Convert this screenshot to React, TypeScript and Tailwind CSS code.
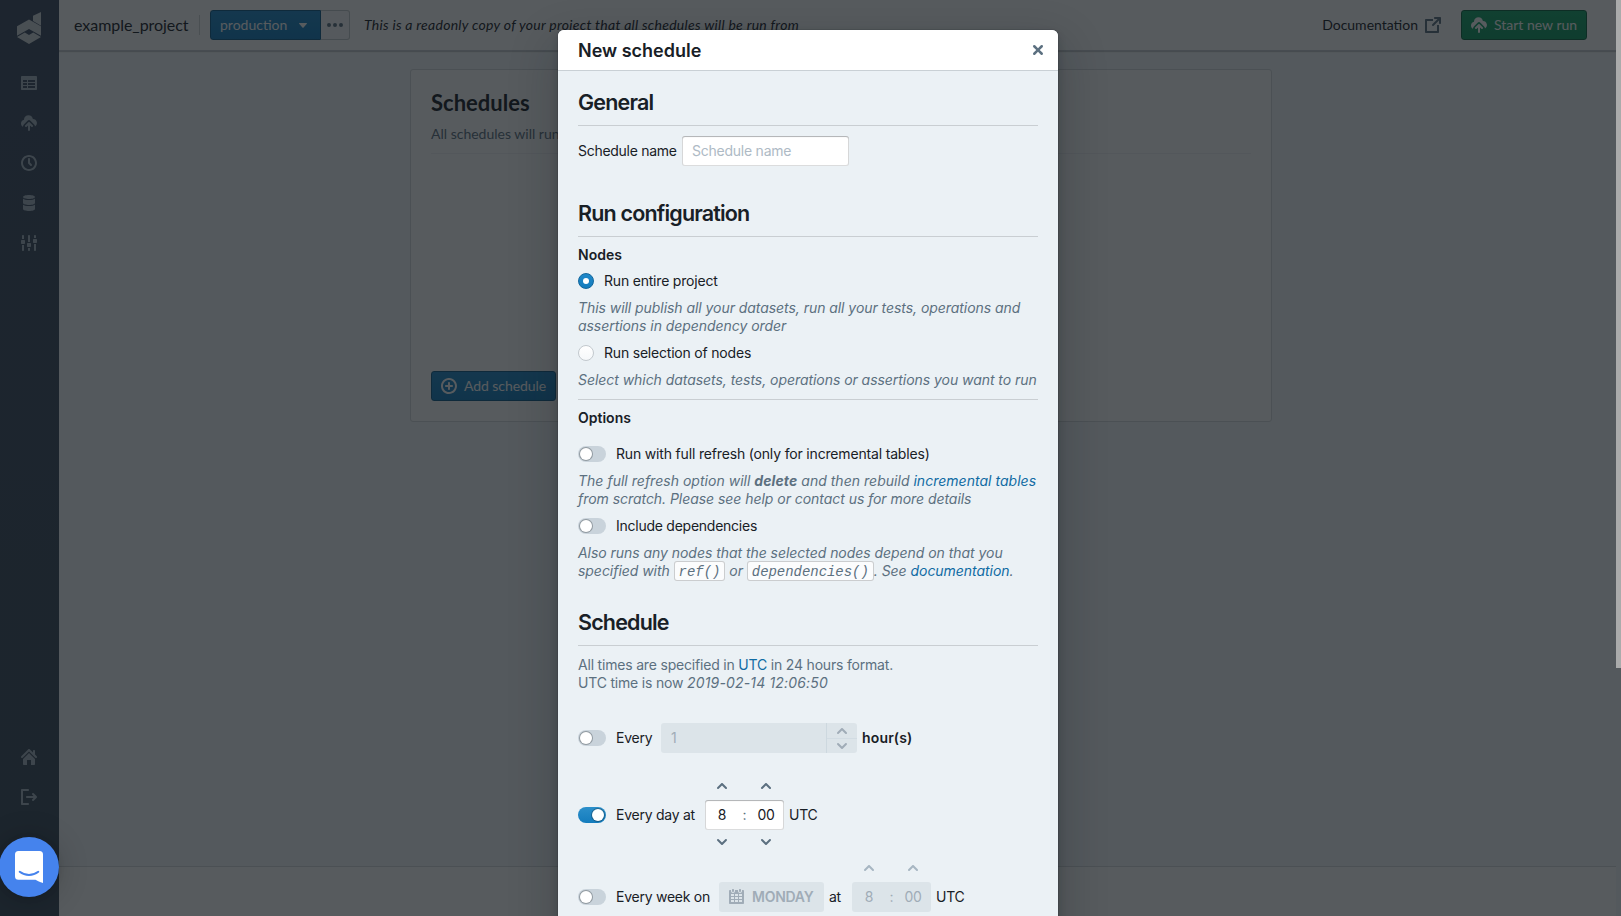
import type { ReactNode } from "react";

type IconProps = { d: string; className?: string; size?: number };

const ICONS = {
  table:
    "M15 1H1c-.6 0-1 .5-1 1v12c0 .6.4 1 1 1h14c.6 0 1-.4 1-1V2c0-.5-.4-1-1-1zM6 13H2v-2h4v2zm0-3H2V8h4v2zm0-3H2V5h4v2zm8 6H7v-2h7v2zm0-3H7V8h7v2zm0-3H7V5h7v2z",
  upload:
    "M8.71 7.29a1 1 0 0 0-1.42 0l-3 3a1 1 0 0 0 1.42 1.42L7 10.41V15a1 1 0 1 0 2 0v-4.59l1.29 1.3a1 1 0 0 0 1.42-1.42l-3-3zM12 4h-.1C11.5 1.800 9.900.2 7.500.2 5 .2 3 1.900 3 4.400v.4C1.200 5.200 0 6.700 0 8.500c0 1.400.7 2.600 1.900 3.200.1-.8.5-1.600 1-2.200l3.700-3.700a2 2 0 0 1 2.800 0l3.700 3.700c.5.500.800 1.200.900 1.900A3.990 3.990 0 0 0 12 4z",
  time:
    "M8 0C3.580 0 0 3.580 0 8s3.580 8 8 8 8-3.580 8-8-3.580-8-8-8zm0 14c-3.310 0-6-2.690-6-6s2.690-6 6-6 6 2.690 6 6-2.690 6-6 6zm1-6.410V4c0-.55-.45-1-1-1s-1 .45-1 1v4c0 .28.11.53.29.71l2 2a1.003 1.003 0 0 0 1.420-1.420L9 7.590z",
  database:
    "M8 0C4.700 0 2 .9 2 2s2.700 2 6 2 6-.9 6-2-2.700-2-6-2zM2 3.500V8c0 1.100 2.700 2 6 2s6-.9 6-2V3.500C13 4.500 10.700 5 8 5s-5-.5-6-1.500zm0 6V14c0 1.100 2.700 2 6 2s6-.9 6-2V9.500c-1 1-3.300 1.500-6 1.500s-5-.5-6-1.500z",
  settings:
    "M3 1c0-.55-.45-1-1-1S1 .45 1 1v3h2V1zM1 15c0 .55.45 1 1 1s1-.45 1-1v-5H1v5zM3.200 5H.8C.36 5 0 5.450 0 6v2c0 .55.36 1 .8 1h2.400c.44 0 .8-.45.8-1V6c0-.55-.36-1-.8-1zM9 1c0-.55-.45-1-1-1S7 .45 7 1v6h2V1zM7 15c0 .55.45 1 1 1s1-.45 1-1v-2H7v2zm2.200-7H6.800c-.44 0-.8.45-.8 1v2c0 .55.36 1 .8 1h2.400c.44 0 .8-.45.8-1V9c0-.55-.36-1-.8-1zM15 1c0-.55-.45-1-1-1s-1 .45-1 1v2h2V1zm-2 14c0 .55.45 1 1 1s1-.45 1-1V9h-2v6zm2.200-11h-2.400c-.44 0-.8.45-.8 1v2c0 .55.36 1 .8 1h2.400c.44 0 .8-.45.8-1V5c0-.55-.36-1-.8-1z",
  home:
    "M2 10v5c0 .55.45 1 1 1h3v-5h4v5h3c.55 0 1-.45 1-1v-5L8 4l-6 6zm13.710-2.710L14 5.590V2c0-.55-.45-1-1-1s-1 .45-1 1v1.590L8.710.29C8.530.11 8.280 0 8 0s-.53.11-.71.29l-7 7a1.003 1.003 0 0 0 1.420 1.420L8 2.410l6.290 6.290c.18.19.43.3.71.3a1.003 1.003 0 0 0 .71-1.710z",
  logout:
    "M7 14H2V2h5c.55 0 1-.45 1-1s-.45-1-1-1H1C.45 0 0 .45 0 1v14c0 .55.45 1 1 1h6c.55 0 1-.45 1-1s-.45-1-1-1zm8.710-6.710l-3-3a1.003 1.003 0 0 0-1.420 1.420L12.590 7H6c-.55 0-1 .45-1 1s.45 1 1 1h6.590l-1.290 1.290c-.19.18-.3.43-.3.71a1.003 1.003 0 0 0 1.710.71l3-3c.18-.18.29-.43.29-.71 0-.28-.11-.53-.29-.71z",
  share:
    "M15 0h-5c-.55 0-1 .45-1 1s.45 1 1 1h2.590L7.290 7.290a1.003 1.003 0 0 0 1.420 1.420L14 3.410V6c0 .55.45 1 1 1s1-.45 1-1V1c0-.55-.45-1-1-1zm-3 8v6H2V4h6V2H1c-.55 0-1 .45-1 1v12c0 .55.45 1 1 1h12c.55 0 1-.45 1-1V8h-2z",
  more: "M2 6.030a2 2 0 1 0 0 4 2 2 0 1 0 0-4zM14 6.030a2 2 0 1 0 0 4 2 2 0 1 0 0-4zM8 6.030a2 2 0 1 0 0 4 2 2 0 1 0 0-4z",
  caret:
    "M12 6.500c0-.28-.22-.5-.5-.5h-7a.495.495 0 0 0-.37.83l3.500 4c.09.1.22.17.37.17s.28-.07.37-.17l3.500-4c.08-.09.13-.2.13-.33z",
  add:
    "M10.990 6.990h-2v-2c0-.55-.45-1-1-1s-1 .45-1 1v2h-2c-.55 0-1 .45-1 1s.45 1 1 1h2v2c0 .55.45 1 1 1s1-.45 1-1v-2h2c.55 0 1-.45 1-1s-.45-1-1-1zm-3-7c-4.420 0-8 3.580-8 8s3.580 8 8 8 8-3.580 8-8-3.580-8-8-8zm0 14c-3.310 0-6-2.690-6-6s2.690-6 6-6 6 2.690 6 6-2.680 6-6 6z",
  cross:
    "M9.410 8l2.290-2.290c.19-.18.3-.43.3-.71a1.003 1.003 0 0 0-1.710-.71L8 6.590l-2.290-2.300a1.003 1.003 0 0 0-1.420 1.420L6.590 8 4.300 10.290c-.19.18-.3.43-.3.71a1.003 1.003 0 0 0 1.710.71L8 9.410l2.290 2.290c.18.19.43.3.71.3a1.003 1.003 0 0 0 .71-1.710L9.410 8z",
  up: "M12.710 9.290l-4-4C8.530 5.110 8.280 5 8 5s-.53.11-.71.29l-4 4a1.003 1.003 0 0 0 1.420 1.420L8 7.410l3.290 3.290c.18.19.43.3.71.3a1.003 1.003 0 0 0 .71-1.710z",
  down: "M12 5c-.28 0-.53.11-.71.29L8 8.590l-3.290-3.300a1.003 1.003 0 0 0-1.420 1.420l4 4c.18.18.43.29.71.29s.53-.11.71-.29l4-4A1.003 1.003 0 0 0 12 5z",
  calendar:
    "M11 3c.6 0 1-.5 1-1V1c0-.6-.4-1-1-1s-1 .4-1 1v1c0 .5.4 1 1 1zm3-2h-1v1c0 1.100-.9 2-2 2s-2-.9-2-2V1H6v1c0 1.100-.9 2-2 2s-2-.9-2-2V1H1c-.6 0-1 .5-1 1v12c0 .6.4 1 1 1h13c.6 0 1-.4 1-1V2c0-.6-.5-1-1-1zM5 13H2v-2h3v2zm0-3H2V8h3v2zm0-3H2V5h3v2zm4 6H6v-2h3v2zm0-3H6V8h3v2zm0-3H6V5h3v2zm4 6h-3v-2h3v2zm0-3h-3V8h3v2zm0-3h-3V5h3v2zM4 3c.6 0 1-.5 1-1V1c0-.6-.4-1-1-1S3 .4 3 1v1c0 .5.4 1 1 1z",
};

function Icon({ d, className = "", size = 16 }: IconProps) {
  return (
    <svg width={size} height={size} viewBox="0 0 16 16" fill="currentColor" fillRule="evenodd" className={`shrink-0 ${className}`}>
      <path d={d} />
    </svg>
  );
}

function Sidebar() {
  const items = [ICONS.table, ICONS.upload, ICONS.time, ICONS.database, ICONS.settings];
  return (
    <nav className="flex w-[59px] shrink-0 flex-col items-center bg-linear-to-b from-[#3c4a62] to-[#3b4a5a] pt-3 pr-px text-[#a7b6c2]">
      <svg width="24" height="32" viewBox="0 0 24 32" fill="#d0d6da">
        <path d="M16 3.700L24 0v13.700l-8-4.600z" />
        <path d="M0 14.300L12 7.500l12 6.800v9.500l-12-6.700-12 6.700z" />
        <path d="M0 25.100l7.800-4.500 4.200 2.300 4.200-2.300 7.800 4.500-12 6.800z" />
      </svg>
      <div className="mt-[31px] flex flex-col gap-6">
        {items.map((d) => (
          <Icon key={d} d={d} />
        ))}
      </div>
      <div className="mt-auto mb-[111px] flex flex-col gap-6">
        <Icon d={ICONS.home} />
        <Icon d={ICONS.logout} />
      </div>
    </nav>
  );
}

function Header() {
  return (
    <header className="flex h-[51px] shrink-0 items-center border-b border-[#c9ced2] bg-white pr-[29px] pl-[15px] shadow-[0_1px_1px_rgba(16,22,26,0.2)]">
      <span className="w-[115px] text-[16px] tracking-[-0.04px]">example_project</span>
      <span className="ml-[10px] h-5 border-l border-[#d3d6d8]" />
      <div className="ml-[10px] flex h-[30px]">
        <button className="flex w-[111px] items-center justify-between rounded-l-[3px] border border-[#0e5a8a] bg-linear-to-b from-[#1f88c9] to-[#137cbd] pr-[9px] pl-[9px] text-white">
          production
          <Icon d={ICONS.caret} />
        </button>
        <button className="flex w-[29px] items-center justify-center rounded-r-[3px] border border-l-0 border-[#c4c8cb] bg-[#f7f9fa] text-[#5c7080]">
          <Icon d={ICONS.more} />
        </button>
      </div>
      <span className="ml-[14px] tracking-[0.27px] whitespace-nowrap italic">
        This is a readonly copy of your project that all schedules will be run from
      </span>
      <span className="mr-[7px] ml-auto">Documentation</span>
      <Icon d={ICONS.share} className="text-[#5c7080]" />
      <button className="ml-5 flex h-[30px] w-[126px] items-center gap-[7px] rounded-[3px] border border-[#0a6640] bg-linear-to-b from-[#14a569] to-[#0f9960] pl-[9px] whitespace-nowrap text-white">
        <Icon d={ICONS.upload} />
        Start new run
      </button>
    </header>
  );
}

function SchedulesCard() {
  return (
    <section className="mt-[18px] ml-[351px] flex h-[353px] w-[862px] flex-col rounded-[3px] border border-[#d5d9dc] bg-white px-5 py-5">
      <h2 className="text-[22px] leading-[26px] font-bold">Schedules</h2>
      <p className="mt-[9px] leading-[18px] text-[#5c7080]">All schedules will run in UTC</p>
      <hr className="mt-[10px] border-[#f0f2f3]" />
      <button className="mt-auto flex h-[30px] w-[125px] items-center gap-[7px] rounded-[3px] border border-[#0e5a8a] bg-linear-to-b from-[#1f88c9] to-[#137cbd] pl-[9px] tracking-[-0.07px] whitespace-nowrap text-white">
        <Icon d={ICONS.add} />
        Add schedule
      </button>
    </section>
  );
}

function SectionTitle({ children }: { children: ReactNode }) {
  return (
    <h3 className="h-[36px] border-b border-[#c9ced2] text-[21.5px] leading-[25px] font-semibold tracking-[-0.82px]">
      {children}
    </h3>
  );
}

function Radio({ checked, label }: { checked?: boolean; label: string }) {
  return (
    <label className="flex h-[18px] items-center gap-[10px] tracking-[-0.2px]">
      {checked ? (
        <span className="flex size-4 items-center justify-center rounded-full border border-[#10669d] bg-linear-to-b from-[#1f88c9] to-[#137cbd]">
          <span className="size-[6px] rounded-full bg-white" />
        </span>
      ) : (
        <span className="size-4 rounded-full border border-[#c3c9ce] bg-linear-to-b from-white to-[#f5f8fa]" />
      )}
      {label}
    </label>
  );
}

function Toggle({ on }: { on?: boolean }) {
  return on ? (
    <span className="flex h-4 w-7 shrink-0 items-center justify-end rounded-full bg-linear-to-b from-[#2b8fca] to-[#137cbd] pr-[2px]">
      <span className="size-3 rounded-full bg-white shadow-[0_0_0_1px_rgba(16,22,26,0.3)]" />
    </span>
  ) : (
    <span className="flex h-4 w-7 shrink-0 items-center rounded-full bg-[#c9d3db] pl-[2px]">
      <span className="size-3 rounded-full bg-white shadow-[0_0_0_1px_rgba(16,22,26,0.3)]" />
    </span>
  );
}

function Help({ children, className = "" }: { children: ReactNode; className?: string }) {
  return <p className={`whitespace-nowrap text-[#5c7080] italic ${className}`}>{children}</p>;
}

function Code({ children }: { children: ReactNode }) {
  return (
    <code className="rounded-[3px] bg-white/80 px-[5px] pt-[3px] pb-px font-['Liberation_Mono',monospace] text-[14px] leading-none shadow-[inset_0_0_0_1px_rgba(16,22,26,0.2)]">
      {children}
    </code>
  );
}

function TimePicker({ disabled }: { disabled?: boolean }) {
  const arrows = disabled ? "text-[#a7b6c2]" : "text-[#5c7080]";
  const box = disabled
    ? "bg-[#dce4e9] text-[#a0acb7]"
    : "bg-white shadow-[inset_0_0_0_1px_rgba(16,22,26,0.15),inset_0_1px_1px_rgba(16,22,26,0.2)]";
  return (
    <div className="w-[79px]">
      <div className={`flex h-[23px] gap-7 pt-px pl-[9px] ${arrows}`}>
        <Icon d={ICONS.up} />
        <Icon d={ICONS.up} />
      </div>
      <div className={`flex h-[30px] items-center rounded-[3px] ${box}`}>
        <span className="w-[34px] text-center">8</span>
        <span className={`w-[11px] text-center ${disabled ? "" : "text-[#5c7080]"}`}>:</span>
        <span className="w-[32px] text-center">00</span>
      </div>
      <div className={`flex h-[23px] gap-7 pt-[4px] pl-[9px] ${arrows}`}>
        <Icon d={ICONS.down} />
        <Icon d={ICONS.down} />
      </div>
    </div>
  );
}

function ScheduleDialog() {
  return (
    <div className="h-[1000px] w-[500px] rounded-[6px] bg-[#ebf1f5] font-['Inter',sans-serif] shadow-[0_0_0_1px_rgba(16,22,26,0.1),0_4px_8px_rgba(16,22,26,0.2),0_18px_46px_6px_rgba(16,22,26,0.2)]">
      <div className="flex h-[41px] items-center justify-between rounded-t-[6px] border-b border-[#c9d0d5] bg-white pr-[10px] pl-5">
        <h4 className="text-[18px] leading-[21px] font-semibold">New schedule</h4>
        <Icon d={ICONS.cross} size={20} className="text-[#5c7080]" />
      </div>
      <div className="px-5 pt-[19px]">
        <SectionTitle>General</SectionTitle>
        <div className="mt-[10px] flex h-[30px] items-center">
          <span className="w-[104px] tracking-[-0.28px]">Schedule name</span>
          <input
            placeholder="Schedule name"
            className="h-[30px] w-[167px] rounded-[3px] bg-white px-[10px] pb-[2px] tracking-[-0.24px] shadow-[inset_0_0_0_1px_rgba(16,22,26,0.15),inset_0_1px_1px_rgba(16,22,26,0.2)] placeholder:text-[#aebac5]"
          />
        </div>

        <div className="mt-[35px]">
          <SectionTitle>Run configuration</SectionTitle>
        </div>
        <p className="mt-[9px] font-semibold">Nodes</p>
        <div className="mt-2">
          <Radio checked label="Run entire project" />
        </div>
        <Help className="mt-[9px] tracking-[-0.055px]">
          This will publish all your datasets, run all your tests, operations and
          <br />
          assertions in dependency order
        </Help>
        <div className="mt-[9px]">
          <Radio label="Run selection of nodes" />
        </div>
        <Help className="mt-[9px] tracking-[-0.05px]">Select which datasets, tests, operations or assertions you want to run</Help>
        <hr className="mt-[10px] border-[#c9ced2]" />
        <p className="mt-[9px] font-semibold">Options</p>
        <div className="mt-[18px] flex h-[18px] items-center gap-[10px] tracking-[-0.17px]">
          <Toggle />
          Run with full refresh (only for incremental tables)
        </div>
        <Help className="mt-[9px] tracking-[-0.045px]">
          <span className="tracking-[0.02px]">
            The full refresh option will <b className="font-bold tracking-[0.1px]">delete</b> and then rebuild{" "}
            <span className="text-[#106ba3]">incremental tables</span>
          </span>
          <br />
          from scratch. Please see help or contact us for more details
        </Help>
        <div className="mt-[9px] flex h-[18px] items-center gap-[10px] tracking-[-0.25px]">
          <Toggle />
          Include dependencies
        </div>
        <Help className="mt-[9px] tracking-[-0.045px]">
          Also runs any nodes that the selected nodes depend on that you
          <br />
          specified with <Code>ref()</Code> or <Code>dependencies()</Code>. See{" "}
          <span className="text-[#106ba3]">documentation</span>.
        </Help>

        <div className="mt-[30px]">
          <SectionTitle>Schedule</SectionTitle>
        </div>
        <p className="mt-[10px] tracking-[-0.19px] text-[#5c7080]">
          All times are specified in <span className="text-[#106ba3]">UTC</span> in 24 hours format.
          <br />
          UTC time is now <i className="tracking-[0.16px]">2019-02-14 12:06:50</i>
        </p>
        <div className="mt-[31px] flex h-[30px] items-center tracking-[-0.25px]">
          <Toggle />
          <span className="ml-[10px] w-[45px]">Every</span>
          <div className="flex h-[30px] w-[196px] items-center rounded-[3px] bg-[#dce4e9] text-[#a0acb7]">
            <span className="flex-1 pl-[10px]">1</span>
            <span className="flex h-full w-[31px] flex-col border-l border-[#cdd8df]">
              <span className="flex h-[16px] items-center justify-center border-b border-[#d2dce3] pt-px">
                <Icon d={ICONS.up} />
              </span>
              <span className="flex h-[14px] items-center justify-center">
                <Icon d={ICONS.down} />
              </span>
            </span>
          </div>
          <b className="ml-[5px] font-semibold tracking-[0.16px]">hour(s)</b>
        </div>
        <div className="mt-6 flex items-center tracking-[-0.25px]">
          <Toggle on />
          <span className="ml-[10px] w-[89px]">Every day at</span>
          <TimePicker />
          <span className="ml-[5px]">UTC</span>
        </div>
        <div className="mt-[6px] flex items-center tracking-[-0.25px]">
          <Toggle />
          <span className="ml-[10px] w-[103px]">Every week on</span>
          <button className="flex h-[30px] w-[105px] items-center gap-[7px] rounded-[3px] bg-[#dce4e9] pl-[10px] font-semibold text-[#a0acb7]">
            <Icon d={ICONS.calendar} />
            MONDAY
          </button>
          <span className="ml-[5px] w-[23px]">at</span>
          <TimePicker disabled />
          <span className="ml-[5px]">UTC</span>
        </div>
      </div>
    </div>
  );
}

export default function App() {
  return (
    <div className="relative h-[916px] w-[1621px] overflow-hidden bg-[#f5f8fa] font-['Lato',sans-serif] text-[14px] leading-[18px] text-[#182026]">
      <div className="flex h-full">
        <Sidebar />
        <main className="flex w-[1557px] shrink-0 flex-col">
          <Header />
          <SchedulesCard />
          <footer className="mt-auto h-[50px] border-t border-[#d5d9dc] bg-[#fdfefe]" />
        </main>
      </div>

      <div className="absolute inset-0 bg-[rgba(16,22,26,0.7)]" />
      <div className="absolute top-0 right-0 h-[668px] w-[5px] bg-[#aaabab]" />

      <div className="absolute top-[30px] left-[558px]">
        <ScheduleDialog />
      </div>

      <button className="absolute top-[837px] left-[-1px] flex size-[60px] items-center justify-center rounded-full bg-[#4583ed] shadow-[0_1px_6px_rgba(0,0,0,0.1),0_2px_32px_rgba(0,0,0,0.2)]">
        <svg width="28" height="32" viewBox="0 0 28 32">
          <path d="M3.500 0h21A3.500 3.500 0 0 1 28 3.500V32s-3.700-1.250-7.500-3.300h-17A3.500 3.500 0 0 1 0 25.200V3.500A3.500 3.500 0 0 1 3.500 0z" fill="#fff" />
          <path d="M4.700 20.800c5.500 4.200 13.100 4.200 18.600 0" fill="none" stroke="#4583ed" strokeWidth="2" strokeLinecap="round" />
        </svg>
      </button>
    </div>
  );
}
